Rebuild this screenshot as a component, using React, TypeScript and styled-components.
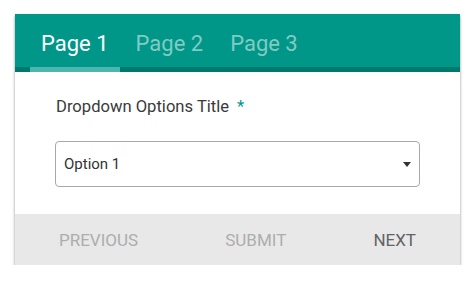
import styled, { createGlobalStyle } from "styled-components";

const GlobalStyle = createGlobalStyle`
	body {
		margin: 0;
		background: #fff;
		font-family: Roboto, "Liberation Sans", sans-serif;
	}
`;

const Page = styled.div`
	padding: 14px 14px 0 15px;
`;

const Card = styled.div`
	width: 445px;
	background: #fff;
	box-shadow: 0 2px 3px rgba(0, 0, 0, 0.35), 0 0 2px rgba(0, 0, 0, 0.1);
`;

const TabBar = styled.div`
	display: flex;
	gap: 5px;
	padding-left: 15px;
	background: #009688;
	box-shadow: inset 0 -5px 0 #00796b;
`;

const Tab = styled.div<{ $active?: boolean }>`
	padding: 17px 11px 10px;
	font-size: 22px;
	line-height: 26px;
	color: ${(p) => (p.$active ? "#ffffff" : "#80cbc4")};
	border-bottom: 5px solid ${(p) => (p.$active ? "#4db6ac" : "transparent")};
`;

const Body = styled.div`
	padding: 25px 40px 27px 41px;
`;

const Label = styled.div`
	font-size: 16.6px;
	line-height: 20px;
	color: #3a3a3a;
	margin-bottom: 24px;

	& > span {
		color: #009688;
		margin-left: 8px;
	}
`;

const SelectBox = styled.div`
	height: 44px;
	display: flex;
	align-items: center;
	justify-content: space-between;
	padding: 0 8px 0 8px;
	border: 1px solid #a8a8a8;
	border-radius: 4px;
	margin-left: -1px;
	font-size: 15px;
	color: #333;
`;

const Footer = styled.div`
	height: 51px;
	display: flex;
	align-items: center;
	justify-content: space-between;
	padding: 0 44px;
	background: #e8e8e8;
`;

const FooterButton = styled.span<{ $enabled?: boolean }>`
	font-size: 17px;
	text-transform: uppercase;
	color: ${(p) => (p.$enabled ? "#636363" : "#adadad")};
`;

function Caret() {
	return (
		<svg width="8" height="5" viewBox="0 0 8 5">
			<path d="M0 0h8L4 5z" fill="#333" />
		</svg>
	);
}

export default function App() {
	const tabs = ["Page 1", "Page 2", "Page 3"];
	return (
		<Page>
			<GlobalStyle />
			<Card>
				<TabBar>
					{tabs.map((t, i) => <Tab key={i} $active={i === 0}>{t}</Tab>)}
				</TabBar>
				<Body>
					<Label>Dropdown Options Title<span>*</span></Label>
					<SelectBox>
						<span>Option 1</span>
						<Caret />
					</SelectBox>
				</Body>
				<Footer>
					<FooterButton>Previous</FooterButton>
					<FooterButton>Submit</FooterButton>
					<FooterButton $enabled>Next</FooterButton>
				</Footer>
			</Card>
		</Page>
	);
}
